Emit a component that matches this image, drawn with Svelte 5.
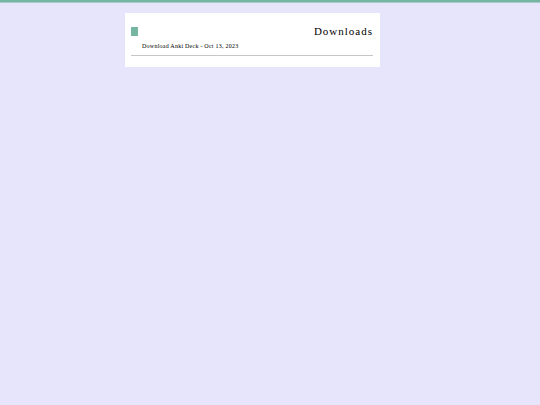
<script lang="ts">
	const decks = [{ name: 'Download Anki Deck - Oct 13, 2023', url: '#download' }];
</script>

<div class="page">
	<main>
		<header>
			<a href="#home" class="home" aria-label="Home"></a>
			<h1>Downloads</h1>
		</header>
		<ul>
			{#each decks as deck}
				<li><a href={deck.url}>{deck.name}</a></li>
			{/each}
		</ul>
	</main>
</div>

<style>
	:global(body) {
		background: #e7e5fb;
	}

	.page {
		display: grid;
		grid-template-columns: 125fr 255fr 160fr;
		border-top: 2px solid #76b5a2;
		box-shadow: inset 0 1px #a7cdc8;
		padding-top: 11px;
		font-family: 'Liberation Serif', 'Times New Roman', serif;
		color: #000;
	}

	main {
		grid-column: 2;
		background: #fff;
		padding: 11px 7px 11px 6px;
	}

	header {
		display: flex;
		align-items: center;
		justify-content: space-between;
	}

	.home {
		width: 7px;
		height: 9px;
		background: #76b5a2;
	}

	h1 {
		margin: 0;
		font-size: 11px;
		line-height: 15px;
		font-weight: normal;
		letter-spacing: 1px;
	}

	ul {
		list-style: none;
		margin: 0;
		padding: 3px 0 4px 11px;
		border-bottom: 1px solid #c6c6c6;
	}

	li {
		font-size: 6px;
		line-height: 9px;
		letter-spacing: 0.04em;
	}

	li a {
		color: inherit;
		text-decoration: none;
	}
</style>
